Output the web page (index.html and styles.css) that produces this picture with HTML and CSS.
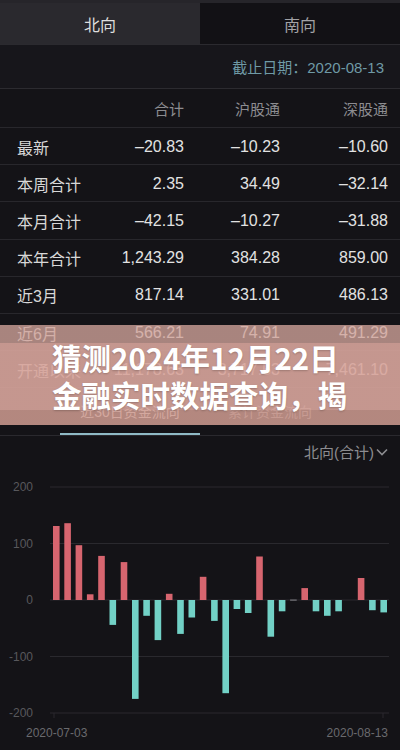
FILE: index.html
```html
<!DOCTYPE html>
<html lang="zh-CN">
<head>
  <meta charset="UTF-8">
  <title>北向资金</title>
  <link rel="stylesheet" href="styles.css">
</head>
<body>

  <div class="screen">
    <div class="tabs">
      <div class="tab active">北向</div>
      <div class="tab">南向</div>
    </div>

    <div class="date-row">截止日期：2020-08-13</div>

    <div class="flow">
      <div class="row head">
        <span></span><span>合计</span><span>沪股通</span><span>深股通</span>
      </div>
      <div class="row"><span class="label">最新</span><span>–20.83</span><span>–10.23</span><span>–10.60</span></div>
      <div class="row"><span class="label">本周合计</span><span>2.35</span><span>34.49</span><span>–32.14</span></div>
      <div class="row"><span class="label">本月合计</span><span>–42.15</span><span>–10.27</span><span>–31.88</span></div>
      <div class="row"><span class="label">本年合计</span><span>1,243.29</span><span>384.28</span><span>859.00</span></div>
      <div class="row"><span class="label">近3月</span><span>817.14</span><span>331.01</span><span>486.13</span></div>
      <div class="row"><span class="label">近6月</span><span>566.21</span><span>74.91</span><span>491.29</span></div>
      <div class="row"><span class="label">开通以来</span><span>11,178.63</span><span>3,717.53</span><span>7,461.10</span></div>
    </div>

    <div class="chart-tabs">
      <div class="ctab active">近30日资金流向</div>
      <div class="ctab">累计资金流向</div>
    </div>

    <div class="chart-head">
      北向(合计)
      <svg class="chevron" width="12" height="8" viewBox="0 0 12 8">
        <path d="M1 1.5 L6 6.5 L11 1.5" fill="none" stroke="#8c8c90" stroke-width="1.6"/>
      </svg>
    </div>

    <svg class="chart" width="400" height="280" viewBox="0 0 400 280">
      <g class="grid">
        <line x1="50" y1="17" x2="389" y2="17"/>
        <line x1="50" y1="73.5" x2="389" y2="73.5"/>
        <line x1="50" y1="130" x2="389" y2="130"/>
        <line x1="50" y1="186.5" x2="389" y2="186.5"/>
        <line x1="50" y1="243" x2="389" y2="243"/>
        <line x1="54" y1="243" x2="54" y2="248"/>
        <line x1="383" y1="243" x2="383" y2="248"/>
      </g>
      <g class="ylab">
        <text x="33" y="21">200</text>
        <text x="33" y="77.5">100</text>
        <text x="33" y="134">0</text>
        <text x="33" y="190.5">-100</text>
        <text x="33" y="247">-200</text>
      </g>
      <g class="up">
        <rect x="53" y="56" width="6.6" height="74"/>
        <rect x="64.3" y="53.2" width="6.6" height="76.8"/>
        <rect x="75.6" y="75.2" width="6.6" height="54.8"/>
        <rect x="86.9" y="124.3" width="6.6" height="5.7"/>
        <rect x="98.2" y="85.9" width="6.6" height="44.1"/>
        <rect x="120.7" y="92.1" width="6.6" height="37.9"/>
        <rect x="165.9" y="123.8" width="6.6" height="6.2"/>
        <rect x="199.8" y="106.8" width="6.6" height="23.2"/>
        <rect x="256.2" y="86.5" width="6.6" height="43.5"/>
        <rect x="301.4" y="118.1" width="6.6" height="11.9"/>
        <rect x="357.8" y="108" width="6.6" height="22"/>
      </g>
      <g class="down">
        <rect x="109.5" y="130" width="6.6" height="24.9"/>
        <rect x="132" y="130" width="6.6" height="98.9"/>
        <rect x="143.3" y="130" width="6.6" height="15.8"/>
        <rect x="154.6" y="130" width="6.6" height="40.1"/>
        <rect x="177.2" y="130" width="6.6" height="33.9"/>
        <rect x="188.5" y="130" width="6.6" height="17.5"/>
        <rect x="211.1" y="130" width="6.6" height="20.9"/>
        <rect x="222.4" y="130" width="6.6" height="93.2"/>
        <rect x="233.6" y="130" width="6.6" height="9"/>
        <rect x="244.9" y="130" width="6.6" height="13"/>
        <rect x="267.5" y="130" width="6.6" height="36.7"/>
        <rect x="278.8" y="130" width="6.6" height="11.3"/>
        <rect x="312.7" y="130" width="6.6" height="11.3"/>
        <rect x="324" y="130" width="6.6" height="15.8"/>
        <rect x="335.3" y="130" width="6.6" height="11.3"/>
        <rect x="369.1" y="130" width="6.6" height="10.2"/>
        <rect x="380.4" y="130" width="6.6" height="12.4"/>
      </g>
      <rect x="290.1" y="129.5" width="6.6" height="1.2" fill="#77777b"/>
      <g class="xlab">
        <text x="26" y="267">2020-07-03</text>
        <text x="388" y="267" text-anchor="end">2020-08-13</text>
      </g>
    </svg>

    <div class="banner">
      <div class="title">猜测2024年12月22日<br>金融实时数据查询，揭</div>
    </div>
  </div>

</body>
</html>
```

FILE: styles.css
```css
* {
  box-sizing: border-box;
}
body {
  margin: 0;
  background: #141317;
  font-family: "Liberation Sans", "Noto Sans CJK SC", sans-serif;
}
.screen {
  position: relative;
  width: 400px;
  height: 750px;
  overflow: hidden;
  background: #141317;
}
.tabs {
  display: flex;
  height: 45px;
  border-top: 3px solid #26252a;
  border-bottom: 1px solid #2b2a2f;
}
.tab {
  flex: 1;
  display: flex;
  align-items: center;
  justify-content: center;
  font-size: 16px;
  color: #a2a2a6;
  background: #121115;
}
.tab.active {
  background: #2a292e;
  color: #dedede;
}
.date-row {
  height: 44px;
  display: flex;
  align-items: center;
  justify-content: flex-end;
  padding-right: 16px;
  font-size: 15px;
  color: #6f9aa6;
  background: #17161b;
  border-bottom: 1px solid #2c2b30;
}
.row {
  display: grid;
  grid-template-columns: 1fr 96px 96px 108px;
  align-items: center;
  height: 37.2px;
  padding: 1px 12px 0 17px;
  border-top: 1px solid #28272c;
  font-size: 16px;
  color: #e2e2e2;
}
.row span {
  text-align: right;
}
.row .label {
  text-align: left;
  color: #d8d8d8;
}
.row.head {
  height: 38px;
  border-top: none;
  font-size: 15px;
  color: #8c8c90;
}
.chart-tabs {
  display: flex;
  height: 48.6px;
  padding: 0 60px;
  border-top: 1px solid #28272c;
  border-bottom: 1px solid #2a292e;
}
.ctab {
  width: 140px;
  display: flex;
  align-items: center;
  justify-content: center;
  font-size: 14px;
  color: #8c8c90;
  border-bottom: 2px solid transparent;
}
.ctab.active {
  color: #dcdcdc;
  border-bottom-color: #8fbac6;
}
.chart-head {
  height: 34px;
  display: flex;
  align-items: center;
  justify-content: flex-end;
  gap: 2px;
  padding: 0 12px 2px 0;
  font-size: 15px;
  color: #8c8c90;
}
.chart {
  display: block;
}
.grid line {
  stroke: #2a292e;
  stroke-width: 1;
}
.ylab text {
  fill: #58585c;
  font-size: 12px;
  text-anchor: end;
}
.xlab text {
  fill: #6a6a6e;
  font-size: 12px;
}
.up rect {
  fill: #d7656f;
}
.down rect {
  fill: #72d1c6;
}
.banner {
  position: absolute;
  left: 0;
  top: 325px;
  width: 400px;
  height: 100px;
  padding: 14px 0 0 52px;
  background: linear-gradient(to bottom,
    rgba(210, 164, 155, 0.78) 0, rgba(210, 164, 155, 0.78) 18px,
    rgba(216, 165, 156, 0.9) 18px, rgba(216, 165, 156, 0.9) 85px,
    rgba(210, 158, 147, 0.84) 85px);
}
.title {
  font-family: "Noto Sans CJK SC", sans-serif;
  font-weight: 700;
  font-size: 29.5px;
  line-height: 37px;
  color: #ffffff;
  text-shadow: 0 1px 2px rgba(0, 0, 0, 0.2);
}
```
